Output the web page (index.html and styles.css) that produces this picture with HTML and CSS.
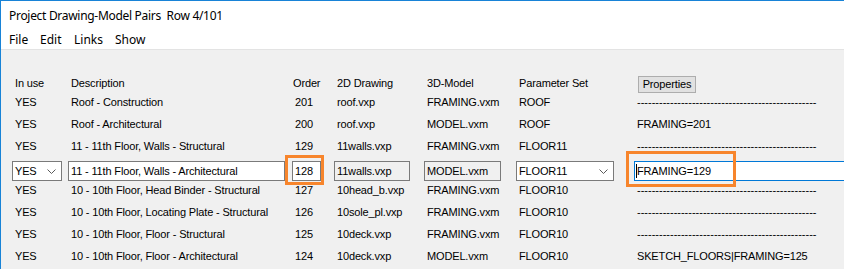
FILE: index.html
```html
<!DOCTYPE html>
<html>
<head>
<meta charset="utf-8">
<link rel="stylesheet" href="styles.css">
</head>
<body>
<div class="window">
  <div class="titlebar">Project Drawing-Model Pairs  Row 4/101</div>
  <div class="menubar">
    <span class="menu m-file">File</span>
    <span class="menu m-edit">Edit</span>
    <span class="menu m-links">Links</span>
    <span class="menu m-show">Show</span>
  </div>
  <div class="client">
    <div class="row head">
      <div class="cell">In use</div>
      <div class="cell">Description</div>
      <div class="cell order-h">Order</div>
      <div class="cell">2D Drawing</div>
      <div class="cell">3D-Model</div>
      <div class="cell">Parameter Set</div>
      <div class="cell btn-cell"><button class="btn">Properties</button></div>
    </div>
    <div class="row">
      <div class="cell">YES</div>
      <div class="cell">Roof - Construction</div>
      <div class="cell">201</div>
      <div class="cell">roof.vxp</div>
      <div class="cell">FRAMING.vxm</div>
      <div class="cell">ROOF</div>
      <div class="cell dash">-------------------------------------------------</div>
    </div>
    <div class="row">
      <div class="cell">YES</div>
      <div class="cell">Roof - Architectural</div>
      <div class="cell">200</div>
      <div class="cell">roof.vxp</div>
      <div class="cell">MODEL.vxm</div>
      <div class="cell">ROOF</div>
      <div class="cell">FRAMING=201</div>
    </div>
    <div class="row">
      <div class="cell">YES</div>
      <div class="cell">11 - 11th Floor, Walls - Structural</div>
      <div class="cell">129</div>
      <div class="cell">11walls.vxp</div>
      <div class="cell">FRAMING.vxm</div>
      <div class="cell">FLOOR11</div>
      <div class="cell dash">-------------------------------------------------</div>
    </div>
    <div class="row edit">
      <div class="box combo w-use"><span>YES</span><svg class="chev" width="9" height="5" viewBox="0 0 9 5"><path d="M0.5 0.5 L4.5 4.5 L8.5 0.5" fill="none" stroke="#5a5a5a" stroke-width="1"/></svg></div>
      <div class="box w-desc">11 - 11th Floor, Walls - Architectural</div>
      <div class="box w-order">128<span class="hl hl-order"></span></div>
      <div class="box ro w-2d">11walls.vxp</div>
      <div class="box ro w-3d">MODEL.vxm</div>
      <div class="box combo w-param"><span>FLOOR11</span><svg class="chev" width="9" height="5" viewBox="0 0 9 5"><path d="M0.5 0.5 L4.5 4.5 L8.5 0.5" fill="none" stroke="#5a5a5a" stroke-width="1"/></svg></div>
      <div class="box focus"><span class="caret"></span>FRAMING=129<span class="hl hl-prop"></span></div>
    </div>
    <div class="row">
      <div class="cell">YES</div>
      <div class="cell">10 - 10th Floor, Head Binder - Structural</div>
      <div class="cell">127</div>
      <div class="cell">10head_b.vxp</div>
      <div class="cell">FRAMING.vxm</div>
      <div class="cell">FLOOR10</div>
      <div class="cell dash">-------------------------------------------------</div>
    </div>
    <div class="row">
      <div class="cell">YES</div>
      <div class="cell">10 - 10th Floor, Locating Plate - Structural</div>
      <div class="cell">126</div>
      <div class="cell">10sole_pl.vxp</div>
      <div class="cell">FRAMING.vxm</div>
      <div class="cell">FLOOR10</div>
      <div class="cell dash">-------------------------------------------------</div>
    </div>
    <div class="row">
      <div class="cell">YES</div>
      <div class="cell">10 - 10th Floor, Floor - Structural</div>
      <div class="cell">125</div>
      <div class="cell">10deck.vxp</div>
      <div class="cell">FRAMING.vxm</div>
      <div class="cell">FLOOR10</div>
      <div class="cell dash">-------------------------------------------------</div>
    </div>
    <div class="row">
      <div class="cell">YES</div>
      <div class="cell">10 - 10th Floor, Floor - Architectural</div>
      <div class="cell">124</div>
      <div class="cell">10deck.vxp</div>
      <div class="cell">MODEL.vxm</div>
      <div class="cell">FLOOR10</div>
      <div class="cell">SKETCH_FLOORS|FRAMING=125</div>
    </div>
  </div>
</div>
</body>
</html>
```

FILE: styles.css
```css
html, body {
  margin: 0;
  padding: 0;
  background: #f0f0f0;
}
body {
  width: 844px;
  height: 269px;
  overflow: hidden;
}
.window {
  box-sizing: border-box;
  width: 844px;
  height: 269px;
  border-top: 1px solid #1883d7;
  border-left: 1px solid #1883d7;
  background: #f0f0f0;
  display: flex;
  flex-direction: column;
  color: #000;
}
.titlebar {
  height: 29px;
  line-height: 30px;
  background: #fff;
  padding-left: 8px;
  font-family: "Noto Sans", "Open Sans", sans-serif;
  font-size: 12px;
  letter-spacing: -0.3px;
  white-space: pre;
}
.menubar {
  height: 19px;
  background: #fff;
  border-bottom: 1px solid #e3e3e3;
  display: flex;
  align-items: center;
  padding-left: 8px;
  font-family: "Noto Sans", "Open Sans", sans-serif;
  font-size: 12px;
  line-height: 21px;
}
.menu { display: inline-block; }
.m-file { width: 31px; }
.m-edit { width: 34px; }
.m-links { width: 41px; }
.client {
  padding-top: 20px;
  padding-left: 11px;
  font-family: "Liberation Sans", Arial, sans-serif;
  font-size: 11px;
  letter-spacing: -0.15px;
}
.row {
  display: grid;
  grid-template-columns: 56px 224px 42px 90px 92px 118px 1fr;
  height: 22px;
  align-items: center;
  white-space: nowrap;
}
.row.head {
  height: 21px;
}
.row.head .cell {
  padding-top: 2px;
}
.cell {
  padding-left: 3px;
  line-height: 22px;
}
.order-h { padding-left: 1px; }
.row.head .btn-cell {
  padding-top: 0;
  align-self: end;
  padding-left: 4px;
  padding-bottom: 1px;
  line-height: normal;
}
.btn {
  display: block;
  width: 58px;
  height: 17px;
  margin: 0;
  padding: 0;
  border: 1px solid #adadad;
  background: #e1e1e1;
  font-family: "Liberation Sans", Arial, sans-serif;
  font-size: 11px;
  letter-spacing: -0.15px;
  color: #000;
  line-height: 15px;
}
.dash {
  letter-spacing: 0;
  overflow: hidden;
}
.row.edit {
  align-items: start;
  padding-top: 4px;
  box-sizing: border-box;
}
.box {
  position: relative;
  box-sizing: border-box;
  height: 20px;
  border: 1px solid #7a7a7a;
  background: #fff;
  padding-left: 2px;
  line-height: 18px;
  overflow: visible;
}
.box.ro { background: #f0f0f0; }
.combo {
  display: flex;
  justify-content: space-between;
  align-items: center;
  padding-right: 5px;
}
.chev { display: block; margin-top: 1px; }
.w-use { width: 50px; }
.w-desc { width: 217px; }
.w-order { width: 29px; }
.w-2d { width: 76px; }
.w-3d { width: 77px; }
.w-param { width: 98px; }
.focus {
  border: 1px solid #0078d7;
  border-right: none;
  padding-left: 1px;
}
.caret {
  display: inline-block;
  width: 1px;
  height: 14px;
  background: #000;
  vertical-align: -3px;
}
.hl {
  position: absolute;
  box-sizing: border-box;
  border: 3px solid #f7852c;
}
.hl-order {
  left: -8px;
  top: -7px;
  width: 39px;
  height: 30px;
}
.hl-prop {
  left: -9px;
  top: -11px;
  width: 110px;
  height: 36px;
}
```
